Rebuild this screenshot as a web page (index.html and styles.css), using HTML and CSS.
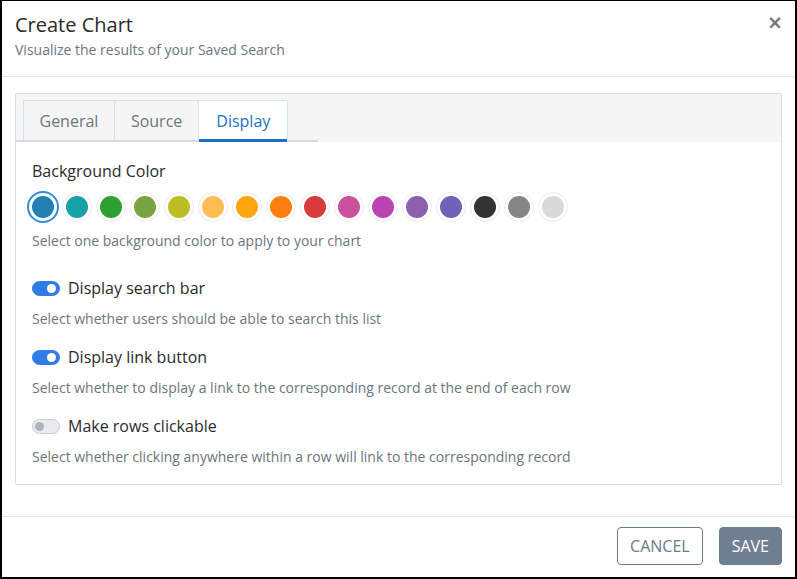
FILE: index.html
```html
<!DOCTYPE html>
<html lang="en">
<head>
  <meta charset="UTF-8" />
  <title>Create Chart</title>
  <link rel="stylesheet" href="styles.css">
</head>
<body>
  <div class="modal">
    <div class="modal-header">
      <div>
        <h2 class="modal-title">Create Chart</h2>
        <p class="modal-subtitle">Visualize the results of your Saved Search</p>
      </div>
      <button class="close-btn">&times;</button>
    </div>

    <div class="modal-body">
      <div class="panel">
        <div class="tab-strip">
          <div class="tab-nav">
            <div class="tab">General</div>
            <div class="tab">Source</div>
            <div class="tab active">Display</div>
          </div>
        </div>

        <div class="panel-content">
          <div class="field-label">Background Color</div>
          <div class="swatches">
            <span class="swatch selected"><i style="background:#2380b4"></i></span>
            <span class="swatch"><i style="background:#17a2a8"></i></span>
            <span class="swatch"><i style="background:#2ca031"></i></span>
            <span class="swatch"><i style="background:#78a541"></i></span>
            <span class="swatch"><i style="background:#bcbd22"></i></span>
            <span class="swatch"><i style="background:#ffbe55"></i></span>
            <span class="swatch"><i style="background:#ffa60f"></i></span>
            <span class="swatch"><i style="background:#ff7f0e"></i></span>
            <span class="swatch"><i style="background:#d83a3b"></i></span>
            <span class="swatch"><i style="background:#c9529b"></i></span>
            <span class="swatch"><i style="background:#b944b0"></i></span>
            <span class="swatch"><i style="background:#8c60ad"></i></span>
            <span class="swatch"><i style="background:#6f62b8"></i></span>
            <span class="swatch"><i style="background:#333333"></i></span>
            <span class="swatch"><i style="background:#858585"></i></span>
            <span class="swatch"><i style="background:#d9d9d9"></i></span>
          </div>
          <div class="help">Select one background color to apply to your chart</div>

          <div class="option first">
            <span class="switch on"></span>
            <span class="option-label">Display search bar</span>
          </div>
          <div class="help">Select whether users should be able to search this list</div>

          <div class="option">
            <span class="switch on"></span>
            <span class="option-label">Display link button</span>
          </div>
          <div class="help">Select whether to display a link to the corresponding record at the end of each row</div>

          <div class="option">
            <span class="switch"></span>
            <span class="option-label">Make rows clickable</span>
          </div>
          <div class="help">Select whether clicking anywhere within a row will link to the corresponding record</div>
        </div>
      </div>
    </div>

    <div class="modal-footer">
      <button class="btn btn-outline">CANCEL</button>
      <button class="btn btn-primary">SAVE</button>
    </div>
  </div>
</body>
</html>
```

FILE: styles.css
```css
body {
  margin: 0;
  font-family: 'Open Sans', 'DejaVu Sans', sans-serif;
  color: #333;
  background: #fff;
}

.modal {
  width: 797px;
  height: 579px;
  box-sizing: border-box;
  border: 2px solid #000;
  border-top-width: 1px;
  display: flex;
  flex-direction: column;
}

.modal-header {
  display: flex;
  justify-content: space-between;
  align-items: flex-start;
  padding: 10px 13px 16px 13px;
  border-bottom: 1px solid #e2e4e8;
}

.modal-title {
  margin: 0;
  font-size: 20px;
  line-height: 28px;
  font-weight: 400;
  color: #2b2b2b;
}

.modal-subtitle {
  margin: 1px 0 0 0;
  font-size: 14px;
  line-height: 20px;
  color: #6c757d;
}

.close-btn {
  border: none;
  background: none;
  padding: 0;
  margin: 1px -1px 0 0;
  font-size: 19px;
  line-height: 20px;
  font-weight: 700;
  color: #777;
  font-family: 'DejaVu Sans', sans-serif;
}

.modal-body {
  flex: 1;
  padding: 16px 13px 0 13px;
}

.panel {
  border: 1px solid #dcdcdc;
  border-radius: 2px;
}

.tab-strip {
  background: #f5f5f5;
  padding-top: 6px;
}

.tab-nav {
  display: flex;
  width: 302px;
  box-sizing: border-box;
  padding-left: 7px;
  border-bottom: 2px solid #d6dadf;
}

.tab {
  height: 40px;
  box-sizing: border-box;
  padding: 0 15.5px;
  margin-bottom: -2px;
  border: 1px solid #d3e2f1;
  border-bottom: none;
  font-size: 16px;
  line-height: 40px;
  color: #6c757d;
  background: #f5f5f5;
}

.tab + .tab {
  border-left: none;
  padding: 0 16px;
}

.tab.active {
  background: #fff;
  color: #1f6fc5;
  box-shadow: inset 0 -3px 0 #1a6fc9;
  height: 42px;
  padding: 0 17px;
}

.panel-content {
  padding: 17px 16px 17px 16px;
}

.field-label {
  font-size: 16px;
  line-height: 24px;
  color: #2b2b2b;
}

.swatches {
  display: flex;
  gap: 4px;
  margin: 9px 0 0 -4px;
}

.swatch {
  width: 30px;
  height: 30px;
  box-sizing: border-box;
  border: 1px solid #ececec;
  border-radius: 50%;
  display: flex;
  align-items: center;
  justify-content: center;
}

.swatch i {
  display: block;
  width: 22px;
  height: 22px;
  border-radius: 50%;
}

.swatch.selected {
  border: 2px solid #2d8ee6;
  width: 32px;
  height: 32px;
  margin: -1px -1px -1px -1px;
}

.help {
  margin-top: 9px;
  font-size: 14px;
  line-height: 20px;
  color: #6c757d;
}

.option {
  display: flex;
  align-items: center;
  gap: 8px;
  margin-top: 16px;
  font-size: 16px;
  line-height: 24px;
  color: #2b2b2b;
}

.option.first {
  margin-top: 25px;
}

.switch {
  position: relative;
  width: 28px;
  height: 15px;
  box-sizing: border-box;
  border: 1px solid #c8cdd2;
  border-radius: 8px;
  background: #e9ecef;
}

.switch::after {
  content: "";
  position: absolute;
  top: 2px;
  left: 2px;
  width: 9px;
  height: 9px;
  border-radius: 50%;
  background: #adb5bd;
}

.switch.on {
  background: #2f7ce8;
  border-color: #2f7ce8;
}

.switch.on::after {
  left: 14px;
  background: #fff;
}

.modal-footer {
  display: flex;
  justify-content: flex-end;
  gap: 16px;
  padding: 10px 13px 12px 13px;
  border-top: 1px solid #e2e4e8;
}

.btn {
  height: 38px;
  padding: 0 12px;
  font-family: 'Open Sans', sans-serif;
  font-size: 16px;
  border-radius: 4px;
  cursor: pointer;
}

.btn-outline {
  background: #fff;
  color: #6c7a8a;
  border: 1px solid #6c7a8a;
}

.btn-primary {
  background: #6f7e90;
  color: #fff;
  border: 1px solid #6f7e90;
}
```
